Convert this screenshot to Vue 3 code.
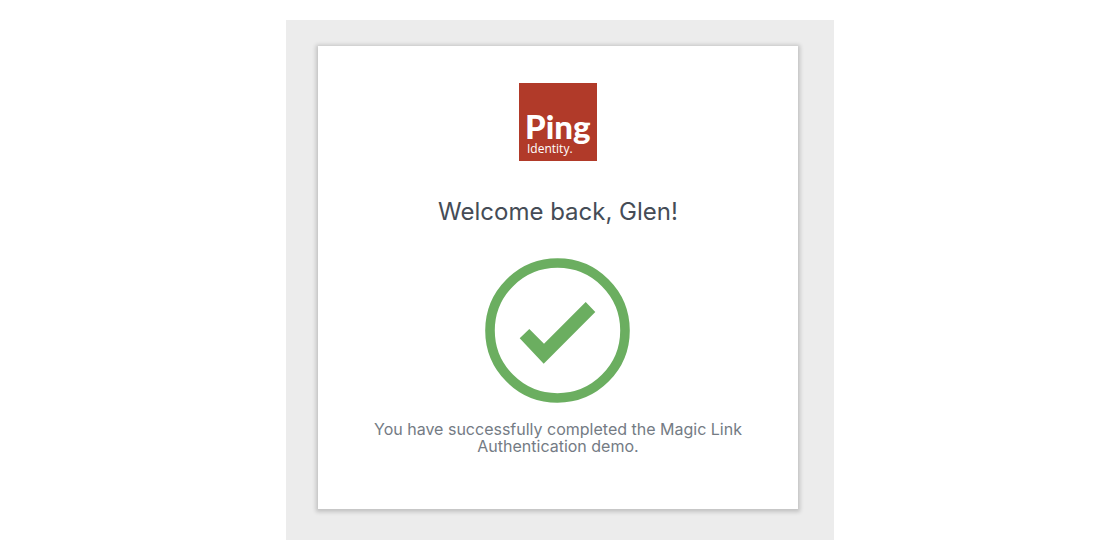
<script setup>
const name = 'Glen'
</script>

<template>
  <div class="page">
    <div class="backdrop">
      <main class="card">
        <svg class="logo" viewBox="0 0 78 78" role="img" aria-label="Ping Identity">
          <rect width="78" height="78" fill="#b13a29" />
          <text class="logo-ping" x="6" y="56">Ping</text>
          <text class="logo-identity" x="8" y="70">Identity.</text>
        </svg>
        <h1 class="title">Welcome back, {{ name }}!</h1>
        <svg class="success" viewBox="0 0 145 145" aria-hidden="true">
          <circle cx="72.5" cy="72.5" r="67.5" fill="none" stroke="#6bae60" stroke-width="9.6" />
          <path d="M34.7 80.3 44.3 71 59 85.7 100.7 44 110.3 54 58.7 105.7Z" fill="#6bae60" />
        </svg>
        <p class="message">You have successfully completed the Magic Link Authentication demo.</p>
      </main>
    </div>
  </div>
</template>

<style>
body {
  margin: 0;
  background: #fff;
}
</style>

<style scoped>
.page {
  display: flex;
  justify-content: center;
  padding: 20px 0;
  font-family: Inter, "Liberation Sans", sans-serif;
}
.backdrop {
  box-sizing: border-box;
  width: 49%;
  min-width: 320px;
  padding: 26px 36px 31px 32px;
  background: #ececec;
}
.card {
  display: flex;
  flex-direction: column;
  align-items: center;
  padding: 37px 40px 54px;
  background: #fff;
  box-shadow: 0 1px 4px 2px rgba(0, 0, 0, 0.18);
}
.logo {
  width: 78px;
  height: 78px;
}
.logo-ping {
  font: 900 33px Lato, sans-serif;
  fill: #fff;
}
.logo-identity {
  font: 12px "Open Sans", sans-serif;
  fill: #fff;
}
.title {
  margin: 35px 0 30px;
  font-size: 24px;
  line-height: 32px;
  font-weight: 400;
  color: #454c56;
}
.success {
  width: 145px;
  height: 145px;
}
.message {
  margin: 18px 0 0;
  font-size: 16px;
  line-height: 17px;
  text-align: center;
  color: #747b84;
}
</style>
